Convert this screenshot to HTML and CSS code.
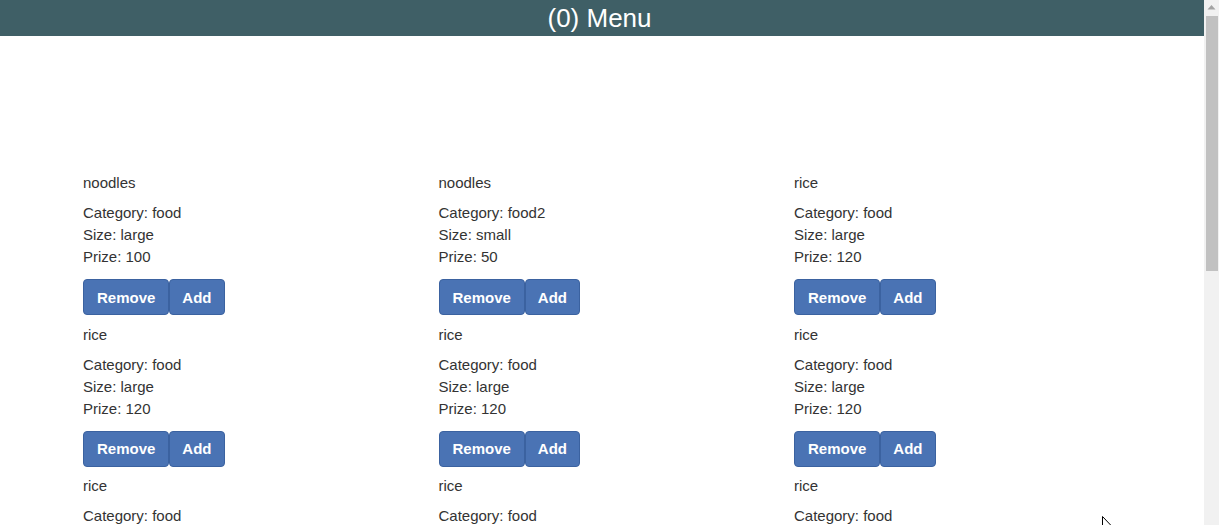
FILE: index.html
```html
<!DOCTYPE html>
<html>
<head>
<meta charset="utf-8">
<link rel="stylesheet" href="styles.css">
</head>
<body>
<div class="page">
<header class="topbar">(0) Menu</header>
<main class="menu">
  <div class="item"><p class="name">noodles</p><div class="info"><div>Category: food</div><div>Size: large</div><div>Prize: 100</div></div><div class="actions"><button class="btn">Remove</button><button class="btn">Add</button></div></div>
  <div class="item"><p class="name">noodles</p><div class="info"><div>Category: food2</div><div>Size: small</div><div>Prize: 50</div></div><div class="actions"><button class="btn">Remove</button><button class="btn">Add</button></div></div>
  <div class="item"><p class="name">rice</p><div class="info"><div>Category: food</div><div>Size: large</div><div>Prize: 120</div></div><div class="actions"><button class="btn">Remove</button><button class="btn">Add</button></div></div>
  <div class="item"><p class="name">rice</p><div class="info"><div>Category: food</div><div>Size: large</div><div>Prize: 120</div></div><div class="actions"><button class="btn">Remove</button><button class="btn">Add</button></div></div>
  <div class="item"><p class="name">rice</p><div class="info"><div>Category: food</div><div>Size: large</div><div>Prize: 120</div></div><div class="actions"><button class="btn">Remove</button><button class="btn">Add</button></div></div>
  <div class="item"><p class="name">rice</p><div class="info"><div>Category: food</div><div>Size: large</div><div>Prize: 120</div></div><div class="actions"><button class="btn">Remove</button><button class="btn">Add</button></div></div>
  <div class="item"><p class="name">rice</p><div class="info"><div>Category: food</div></div></div>
  <div class="item"><p class="name">rice</p><div class="info"><div>Category: food</div></div></div>
  <div class="item"><p class="name">rice</p><div class="info"><div>Category: food</div></div></div>
</main>
</div>
<div class="scrollbar" aria-hidden="true">
  <div class="sb-arrow"><svg width="15" height="16" viewBox="0 0 15 16"><path d="M3.5 9.5 L7.5 5 L11.5 9.5 Z" fill="#a3a3a3"/></svg></div>
  <div class="sb-thumb"></div>
</div>
<svg class="cursor" width="12" height="19" viewBox="0 0 12 19" aria-hidden="true"><path d="M0.5 0.5 L0.5 16 L4 12.5 L6.5 18 L8.5 17 L6 11.5 L11 11.5 Z" fill="#fff" stroke="#000" stroke-width="1"/></svg>
</body>
</html>
```
FILE: styles.css
```css
html, body {
  margin: 0;
  padding: 0;
}
body {
  font-family: "Liberation Sans", Arial, sans-serif;
  color: #333;
  background: #fff;
  position: relative;
  display: flex;
  height: 525px;
  overflow: hidden;
}
.page {
  flex: 1;
  min-width: 0;
  height: 525px;
  overflow: hidden;
}
.scrollbar {
  width: 15px;
  flex: none;
  background: #f1f1f1;
  display: flex;
  flex-direction: column;
}
.sb-arrow {
  height: 16px;
  display: flex;
}
.sb-thumb {
  height: 255px;
  margin: 0 1px 0 2px;
  background: #c1c1c1;
}
.topbar {
  height: 36px;
  line-height: 36px;
  background: #3f5f66;
  color: #fff;
  font-size: 26px;
  text-align: center;
  padding-right: 5px;
}
.menu {
  display: grid;
  grid-template-columns: repeat(3, 355.5px);
  padding: 136px 0 0 83px;
}
.item {
  height: 151.5px;
  font-size: 15px;
}
.name {
  margin: 0 0 8px;
  line-height: 22px;
}
.info {
  line-height: 22px;
}
.actions {
  display: flex;
  margin-top: 11px;
}
.btn {
  font-family: "Liberation Sans", Arial, sans-serif;
  font-size: 15px;
  font-weight: bold;
  color: #fff;
  background: #4a73b4;
  border: 1px solid #3b62a0;
  border-radius: 4px;
  height: 36px;
  padding: 0 13px;
  margin: 0;
  cursor: pointer;
}
.btn + .btn {
  padding: 0 12px;
}
.cursor {
  position: absolute;
  left: 1102px;
  top: 516px;
}
```
